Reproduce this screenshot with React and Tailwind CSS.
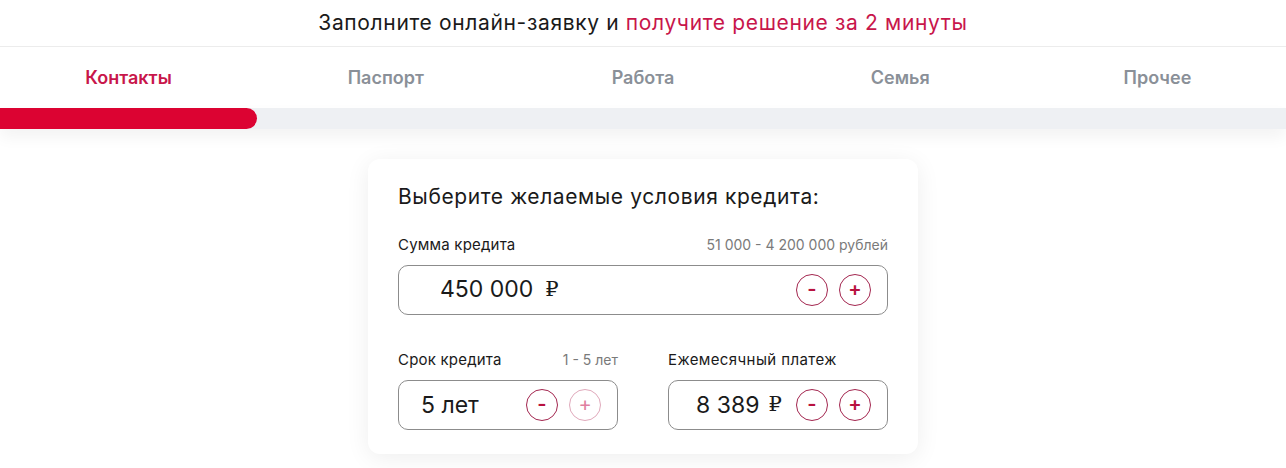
const tabs = ["Контакты", "Паспорт", "Работа", "Семья", "Прочее"];

function StepButton({ sign, disabled }) {
  return (
    <button
      className={
        "w-[32px] h-[32px] rounded-full border flex items-center justify-center text-[20px] leading-none " +
        (disabled
          ? "border-[#e0a9bb] text-[#e07fa0]"
          : "border-[#a3264f] text-[#b8123f] font-semibold")
      }
    >
      <span className="-mt-[2px]">{sign}</span>
    </button>
  );
}

function Field({ value, currency, currencyGap, plusDisabled, className }) {
  return (
    <div
      className={
        "h-[50px] border border-[#8c8c8c] rounded-[10px] flex items-center " + className
      }
    >
      <span className="text-[23px] text-[#1a1a1a]">{value}</span>
      {currency ? (
        <span
          className={"text-[21px] text-[#1a1a1a] " + currencyGap}
          style={{ fontFamily: "'DejaVu Serif', serif" }}
        >
          ₽
        </span>
      ) : null}
      <div className="ml-auto flex gap-[11px]">
        <StepButton sign="-" />
        <StepButton sign="+" disabled={plusDisabled} />
      </div>
    </div>
  );
}

export default function App() {
  return (
    <div
      className="w-[1286px] h-[468px] bg-white overflow-hidden"
      style={{ fontFamily: "Inter, 'Noto Sans', sans-serif" }}
    >
      <div className="h-[47px] flex items-center justify-center border-b border-[#ececec] text-[21px] text-[#1a1a1a] tracking-[0.65px]">
        Заполните онлайн-заявку и&nbsp;
        <span className="text-[#c8164b]">получите решение за 2 минуты</span>
      </div>

      <div className="grid grid-cols-5 h-[61px] items-center">
        {tabs.map((t, i) => (
          <div
            key={t}
            className={
              "text-center text-[18px] font-semibold " +
              (i === 0 ? "text-[#c8164b]" : "text-[#8a9098]")
            }
          >
            {t}
          </div>
        ))}
      </div>

      <div className="h-[21px] bg-[#eef0f3] shadow-[0_8px_16px_rgba(0,0,0,0.05)]">
        <div className="w-[257px] h-[21px] bg-[#dc0332] rounded-r-full" />
      </div>

      <div className="flex justify-center pt-[30px]">
        <div className="w-[550px] bg-white rounded-[12px] shadow-[0_4px_24px_rgba(0,0,0,0.07)] px-[30px] pt-[24px] pb-[24px]">
          <h2 className="text-[21px] text-[#1a1a1a] leading-[28px] tracking-[0.6px]">
            Выберите желаемые условия кредита:
          </h2>

          <div className="mt-[23px] flex items-baseline justify-between">
            <span className="text-[15px] text-[#1a1a1a] tracking-[0.2px]">Сумма кредита</span>
            <span className="text-[14px] text-[#7a7a7a]">51 000 - 4 200 000 рублей</span>
          </div>
          <Field
            value="450 000"
            currency
            currencyGap="ml-[12px]"
            className="mt-[8px] pl-[41px] pr-[16px]"
          />

          <div className="mt-[34px] grid grid-cols-2 gap-[50px]">
            <div>
              <div className="flex items-baseline justify-between">
                <span className="text-[15px] text-[#1a1a1a] tracking-[0.2px]">Срок кредита</span>
                <span className="text-[14px] text-[#7a7a7a]">1 - 5 лет</span>
              </div>
              <Field value="5 лет" plusDisabled className="mt-[9px] pl-[22px] pr-[16px]" />
            </div>
            <div>
              <div className="text-[15px] text-[#1a1a1a] tracking-[0.4px]">Ежемесячный платеж</div>
              <Field
                value="8 389"
                currency
                currencyGap="ml-[9px]"
                className="mt-[9px] pl-[27px] pr-[16px]"
              />
            </div>
          </div>
        </div>
      </div>
    </div>
  );
}
